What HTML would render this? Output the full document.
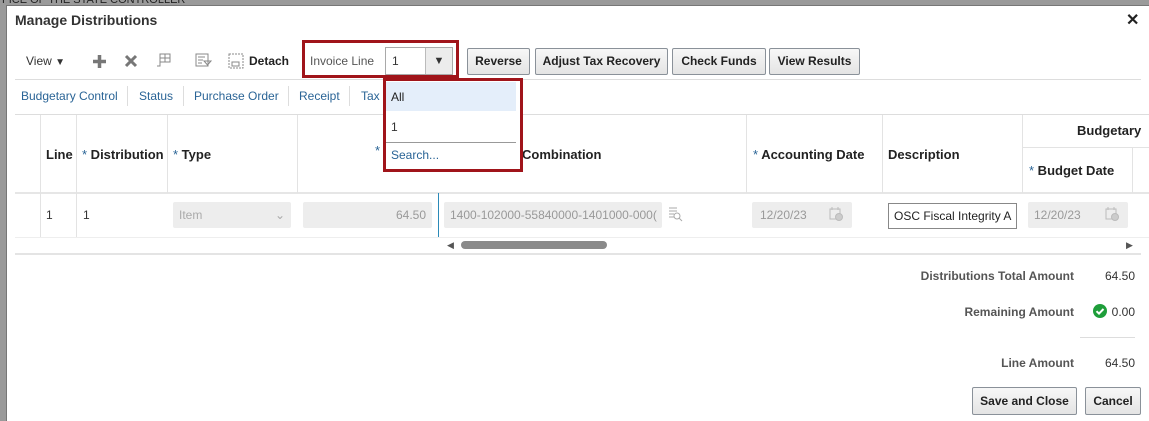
<!DOCTYPE html>
<html><head><meta charset="utf-8"><style>
*{margin:0;padding:0;box-sizing:border-box}
body{width:1149px;height:421px;overflow:hidden;background:#9a9a9a;font-family:"Liberation Sans",Arial,sans-serif;font-size:12px;color:#333;position:relative}
.a{position:absolute}
#dlg{position:absolute;left:6px;top:5px;width:1143px;height:416px;background:#fff;border-left:1px solid #777;border-top:1px solid #777}
.b{position:absolute;height:27px;border:1px solid #8a9199;background:linear-gradient(#f7f7f7,#e4e4e4);font-weight:bold;font-size:12px;color:#222;text-align:center;line-height:25px;border-radius:2px}
.lk{color:#2a6496;font-size:12px}
.sep{position:absolute;width:1px;background:#ddd}
.hd{font-weight:bold;font-size:13px;color:#222}
.st{color:#2a6496;font-weight:normal}
.fld{position:absolute;background:#ededed;border-radius:2px;color:#aaa;font-size:12px;line-height:26px}
.vl{position:absolute;width:1px;background:#e3e3e3;top:115px;height:122px}
.r{text-align:right;font-weight:bold;color:#555;font-size:12px}
</style></head><body>
<div class="a" style="left:0;top:0;font-size:11px;color:#222;top:-6px;left:2px">FICE OF THE STATE CONTROLLER</div>
<div id="dlg"></div>
<div class="a" style="left:15px;top:12px;font-size:14px;font-weight:bold;color:#333">Manage Distributions</div>
<div class="a" style="left:1126px;top:10px;font-size:16px;font-weight:bold;color:#222">✕</div>

<div class="a" style="left:26px;top:54px;font-size:12px;color:#333">View <span style="font-size:10px">▼</span></div>
<svg class="a" style="left:92px;top:54px" width="15" height="15"><path d="M7.5 1v13M1 7.5h13" stroke="#777" stroke-width="3.5"/></svg>
<svg class="a" style="left:124px;top:54px" width="14" height="14"><path d="M2 2l10 10M12 2L2 12" stroke="#777" stroke-width="3"/></svg>
<svg class="a" style="left:155px;top:52px" width="16" height="17" fill="none" stroke="#888"><path d="M5 2h10v8H5zM5 6h10M10 2v8M5 10v4H2"/></svg>
<svg class="a" style="left:195px;top:53px" width="17" height="15" fill="none" stroke="#888"><path d="M1 1h12v12H1zM3 4h7M3 7h5M3 10h4M9 8h7l-3.5 4z"/></svg>
<svg class="a" style="left:228px;top:53px" width="16" height="16" fill="none" stroke="#888" stroke-dasharray="2 1"><path d="M1 1h14v14H1z"/><path d="M4 9h7v4H4z" stroke-dasharray="none"/></svg>
<div class="a" style="left:249px;top:54px;font-weight:bold;color:#222">Detach</div>

<div class="a" style="left:302px;top:40px;width:157px;height:38px;border:3px solid #a0141a"></div>
<div class="a" style="left:310px;top:54px;color:#555">Invoice Line</div>
<div class="a" style="left:385px;top:47px;width:68px;height:28px;border:1px solid #a9a9a9;background:#fff"></div>
<div class="a" style="left:392px;top:54px;color:#333">1</div>
<div class="a" style="left:425px;top:48px;width:27px;height:26px;background:#ececec;border-left:1px solid #bbb;text-align:center;line-height:26px;font-size:11px">▼</div>

<div class="b" style="left:467px;top:48px;width:63px">Reverse</div>
<div class="b" style="left:535px;top:48px;width:133px">Adjust Tax Recovery</div>
<div class="b" style="left:672px;top:48px;width:94px">Check Funds</div>
<div class="b" style="left:769px;top:48px;width:91px">View Results</div>

<div class="a" style="left:15px;top:79px;width:1126px;height:1px;background:#ddd"></div>
<div class="a lk" style="left:21px;top:89px">Budgetary Control</div>
<div class="sep" style="left:127px;top:86px;height:20px"></div>
<div class="a lk" style="left:139px;top:89px">Status</div>
<div class="sep" style="left:183px;top:86px;height:20px"></div>
<div class="a lk" style="left:194px;top:89px">Purchase Order</div>
<div class="sep" style="left:288px;top:86px;height:20px"></div>
<div class="a lk" style="left:299px;top:89px">Receipt</div>
<div class="sep" style="left:349px;top:86px;height:20px"></div>
<div class="a lk" style="left:361px;top:89px">Tax</div>

<div class="a" style="left:15px;top:114px;width:1134px;height:1px;background:#ddd"></div>
<div class="a" style="left:15px;top:192px;width:1134px;height:2px;background:#e6e6e6"></div>
<div class="vl" style="left:40px"></div><div class="vl" style="left:76px"></div>
<div class="vl" style="left:167px;height:78px"></div><div class="vl" style="left:297px;height:78px"></div>
<div class="vl" style="left:746px;height:78px"></div><div class="vl" style="left:882px;height:78px"></div>
<div class="vl" style="left:1022px;height:78px"></div><div class="vl" style="left:1132px;top:147px;height:46px"></div>
<div class="a" style="left:1022px;top:147px;width:127px;height:1px;background:#e3e3e3"></div>
<div class="a" style="left:438px;top:193px;width:1px;height:44px;background:#2b8ab8"></div>

<div class="a hd" style="left:46px;top:147px">Line</div>
<div class="a hd" style="left:82px;top:147px"><span class="st">*</span> Distribution</div>
<div class="a hd" style="left:173px;top:147px"><span class="st">*</span> Type</div>
<div class="a hd" style="left:375px;top:143px"><span class="st">*</span></div>
<div class="a hd" style="left:522px;top:147px">Combination</div>
<div class="a hd" style="left:753px;top:147px"><span class="st">*</span> Accounting Date</div>
<div class="a hd" style="left:888px;top:147px">Description</div>
<div class="a hd" style="left:1077px;top:123px">Budgetary</div>
<div class="a hd" style="left:1029px;top:163px"><span class="st">*</span> Budget Date</div>

<div class="a" style="left:46px;top:208px">1</div>
<div class="a" style="left:83px;top:208px">1</div>
<div class="fld" style="left:173px;top:202px;width:118px;padding-left:6px">Item<span style="position:absolute;right:6px">⌄</span></div>
<div class="fld" style="left:303px;top:202px;width:129px;text-align:right;padding-right:6px;color:#999">64.50</div>
<div class="fld" style="left:444px;top:202px;width:218px;padding-left:6px;color:#999;overflow:hidden;white-space:nowrap">1400-102000-55840000-1401000-000(</div>
<svg class="a" style="left:667px;top:206px" width="16" height="16" fill="none" stroke="#aaa"><path d="M2 2h8M2 5h8M2 8h5M2 11h5"/><circle cx="10" cy="10" r="3"/><path d="M12 12l3 3"/></svg>
<div class="fld" style="left:752px;top:202px;width:100px;padding-left:8px;color:#999">12/20/23</div>
<svg class="a" style="left:828px;top:206px" width="16" height="16" fill="none" stroke="#bbb"><path d="M2 3h10v10H2zM4 1v3M10 1v3"/><circle cx="11" cy="11" r="3.5" fill="#ccc"/></svg>
<div class="a" style="left:888px;top:203px;width:129px;height:26px;border:1px solid #888;padding-left:5px;line-height:24px;color:#222;overflow:hidden;white-space:nowrap">OSC Fiscal Integrity A</div>
<div class="fld" style="left:1028px;top:202px;width:100px;padding-left:6px;color:#999">12/20/23</div>
<svg class="a" style="left:1104px;top:206px" width="16" height="16" fill="none" stroke="#bbb"><path d="M2 3h10v10H2zM4 1v3M10 1v3"/><circle cx="11" cy="11" r="3.5" fill="#ccc"/></svg>

<div class="a" style="left:15px;top:237px;width:1134px;height:1px;background:#eee"></div>
<div class="a" style="left:447px;top:240px;font-size:9px;color:#555">◀</div>
<div class="a" style="left:461px;top:241px;width:146px;height:8px;border-radius:4px;background:#8a8a8a"></div>
<div class="a" style="left:1126px;top:240px;font-size:9px;color:#555">▶</div>
<div class="a" style="left:15px;top:253px;width:1126px;height:2px;background:#e4e4e4"></div>

<div class="a" style="left:383px;top:78px;width:140px;height:94px;border:3px solid #a0141a;background:#fff"></div>
<div class="a" style="left:386px;top:82px;width:130px;height:29px;background:#e4eefa"></div>
<div class="a" style="left:391px;top:90px;color:#222">All</div>
<div class="a" style="left:391px;top:120px;color:#333">1</div>
<div class="a" style="left:386px;top:142px;width:130px;height:1px;background:#999"></div>
<div class="a" style="left:391px;top:148px;color:#2a6496">Search...</div>

<div class="a r" style="right:75px;top:269px">Distributions Total Amount</div>
<div class="a" style="right:14px;top:269px">64.50</div>
<div class="a r" style="right:75px;top:305px">Remaining Amount</div>
<svg class="a" style="left:1093px;top:304px" width="14" height="14"><circle cx="7" cy="7" r="7" fill="#1e9e3a"/><path d="M3.5 7.2l2.5 2.4 4.5-4.6" stroke="#fff" stroke-width="2" fill="none"/></svg>
<div class="a" style="right:14px;top:305px">0.00</div>
<div class="a" style="left:1080px;top:337px;width:55px;height:1px;background:#ddd"></div>
<div class="a r" style="right:75px;top:356px">Line Amount</div>
<div class="a" style="right:14px;top:356px">64.50</div>

<div class="b" style="left:972px;top:387px;width:105px;height:28px;line-height:26px">Save and Close</div>
<div class="b" style="left:1085px;top:387px;width:56px;height:28px;line-height:26px">Cancel</div>
</body></html>
